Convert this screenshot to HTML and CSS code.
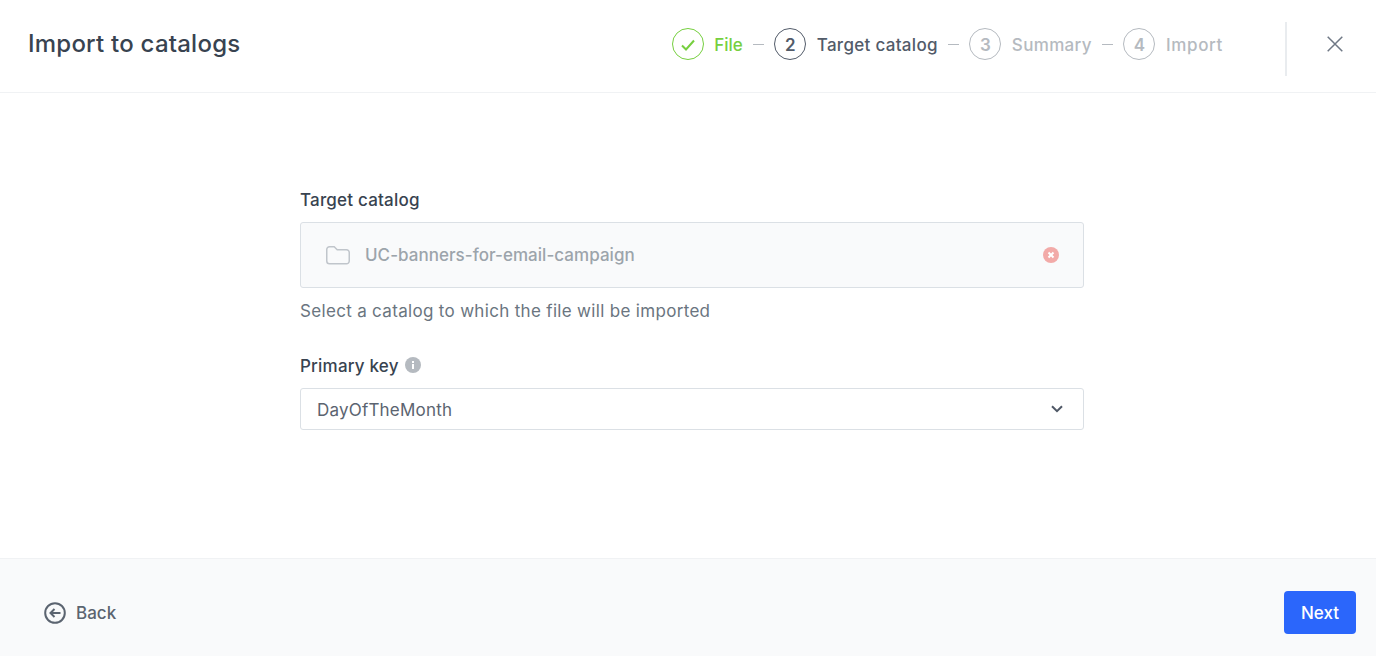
FILE: index.html
```html
<!DOCTYPE html>
<html lang="en">
<head>
<meta charset="utf-8">
<title>Import to catalogs</title>
<link rel="stylesheet" href="styles.css">
</head>
<body>
<div class="app">
  <header class="header">
    <h1 class="title">Import to catalogs</h1>
    <ol class="steps">
      <li class="step step-done">
        <span class="bullet"><svg width="16" height="14" viewBox="0 0 16 14" fill="none"><path d="M2 7.500l4 4 8-9" stroke="currentColor" stroke-width="2"/></svg></span>
        <span class="step-label label-file">File</span>
      </li>
      <li class="dash"></li>
      <li class="step step-current">
        <span class="bullet">2</span>
        <span class="step-label">Target catalog</span>
      </li>
      <li class="dash"></li>
      <li class="step">
        <span class="bullet">3</span>
        <span class="step-label label-summary">Summary</span>
      </li>
      <li class="dash"></li>
      <li class="step">
        <span class="bullet">4</span>
        <span class="step-label label-import">Import</span>
      </li>
    </ol>
    <div class="separator"></div>
    <div class="close-wrap">
      <svg width="16" height="16" viewBox="0 0 16 16" fill="none"><path d="M.7.7l14.600 14.600M15.300.7L.7 15.300" stroke="#6f7885" stroke-width="1.500"/></svg>
    </div>
  </header>
  <main class="main">
    <form class="form">
      <label class="label">Target catalog</label>
      <div class="picked">
        <svg width="24" height="19" viewBox="0 0 24 19" fill="none"><path d="M.75 3.500A2.750 2.750 0 0 1 3.500.75h4.700l3 3h9.300a2.750 2.750 0 0 1 2.750 2.750v8.500a2.750 2.750 0 0 1-2.750 2.750h-17A2.750 2.750 0 0 1 .75 15z" stroke="#c0c5cb" stroke-width="1.500"/></svg>
        <span class="picked-text">UC-banners-for-email-campaign</span>
        <svg width="16" height="16" viewBox="0 0 16 16"><circle cx="8" cy="8" r="8" fill="#f2aaa8"/><path d="M5.500 5.500l5 5M10.500 5.500l-5 5" stroke="#fff" stroke-width="2"/></svg>
      </div>
      <p class="hint">Select a catalog to which the file will be imported</p>
      <div class="label-row">
        <label class="label label-tight">Primary key</label>
        <svg class="info" width="16" height="16" viewBox="0 0 16 16"><circle cx="8" cy="8" r="8" fill="#b5bac0"/><rect x="7" y="7" width="2" height="5" fill="#fff"/><rect x="7" y="4" width="2" height="2" fill="#fff"/></svg>
      </div>
      <div class="select">
        <span class="select-value">DayOfTheMonth</span>
        <svg width="12" height="8" viewBox="0 0 12 8" fill="none"><path d="M1 1.200l5 5 5-5" stroke="#4f5866" stroke-width="2"/></svg>
      </div>
    </form>
  </main>
  <footer class="footer">
    <a class="back">
      <svg width="22" height="22" viewBox="0 0 22 22" fill="none"><circle cx="11" cy="11" r="9.800" stroke="#5b6470" stroke-width="2"/><path d="M16.500 11H6.500M10.500 7l-4 4 4 4" stroke="#5b6470" stroke-width="2"/></svg>
      <span>Back</span>
    </a>
    <button class="next" type="button">Next</button>
  </footer>
</div>
</body>
</html>
```
FILE: styles.css
```css
* { box-sizing: border-box; }
html, body { margin: 0; height: 100%; }
body { font-family: Inter, "Liberation Sans", sans-serif; color: #384350; background: #fff; }
.app { height: 656px; display: flex; flex-direction: column; overflow: hidden; }
.header { height: 93px; flex: none; display: flex; align-items: center; padding: 0 0 4px 28px; border-bottom: 1px solid #f0f2f4; }
.title { margin: 0; padding-bottom: 2px; font-size: 24px; font-weight: 500; letter-spacing: .23px; color: #384350; flex: 1; }
.steps { list-style: none; margin: 0; padding: 0; display: flex; align-items: center; gap: 10.250px; font-size: 17px; font-weight: 500; letter-spacing: .3px; color: #b5bac0; }
.step { display: flex; align-items: center; gap: 10.500px; }
.bullet { width: 32px; height: 32px; padding-top: 1px; border-radius: 50%; border: 1px solid #b5bac0; display: flex; align-items: center; justify-content: center; font-weight: 600; letter-spacing: 0; }
.step-label { padding-top: 2px; }
.label-file { letter-spacing: 0; }
.label-summary { letter-spacing: .35px; }
.label-import { letter-spacing: .65px; }
.step-done { color: #76cf3f; }
.step-done .bullet { border-color: #76cf3f; }
.step-current { color: #525b69; }
.step-current .bullet { border-color: #525b69; }
.dash { width: 11px; height: 1px; background: #b5bac0; }
.separator { width: 2px; height: 54px; margin-left: 62px; align-self: flex-start; margin-top: 22px; background: #e9ecef; }
.close-wrap { width: 89px; padding-left: 7px; display: flex; align-items: center; justify-content: center; }
.main { flex: 1; display: flex; justify-content: center; padding: 95px 0 0 8px; }
.form { width: 784px; }
.label { display: block; font-size: 17px; font-weight: 500; line-height: 24px; letter-spacing: .2px; margin-bottom: 10px; }
.label-tight { margin: 0; }
.picked { height: 66px; background: #f9fafb; border: 1px solid #dbe0e5; border-radius: 3px; display: flex; align-items: center; padding: 0 24px 0 25px; gap: 15px; color: #9ca4ab; font-size: 17px; font-weight: 500; letter-spacing: .04px; }
.picked-text { flex: 1; }
.hint { margin: 11px 0 0; font-size: 17px; line-height: 24px; color: #6a7580; letter-spacing: .32px; }
.label-row { display: flex; align-items: center; gap: 6px; margin-top: 31px; margin-bottom: 10px; }
.info { margin-bottom: 3px; }
.select { height: 42px; border: 1px solid #dbe0e5; border-radius: 3px; display: flex; align-items: center; justify-content: space-between; padding: 0 20px 0 16px; font-size: 17px; letter-spacing: .2px; color: #5b6470; }
.select-value { padding-top: 2px; }
.footer { height: 98px; flex: none; background: #f9fafb; border-top: 1px solid #f0f2f4; display: flex; align-items: center; justify-content: space-between; padding: 10px 20px 0 44px; }
.back { display: flex; align-items: center; gap: 10px; font-size: 17px; font-weight: 500; color: #5b6470; }
.next { width: 72px; height: 43px; border: 0; border-radius: 4px; background: #2b66fb; color: #fff; font: 500 17px Inter, "Liberation Sans", sans-serif; }
```
